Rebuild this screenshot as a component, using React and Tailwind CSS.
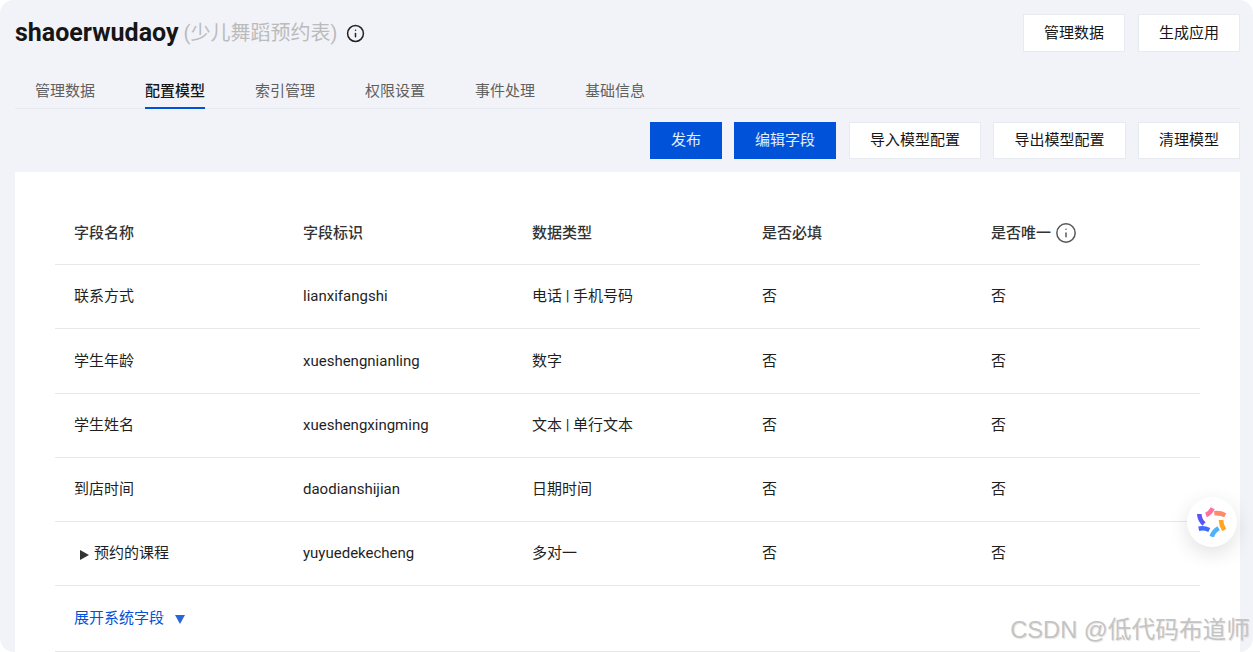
import { Info } from 'lucide-react';

const tabs = ['管理数据', '配置模型', '索引管理', '权限设置', '事件处理', '基础信息'];

const rows = [
  ['联系方式', 'lianxifangshi', '电话 | 手机号码', 'h-[64px]'],
  ['学生年龄', 'xueshengnianling', '数字', 'h-[65px]'],
  ['学生姓名', 'xueshengxingming', '文本 | 单行文本', 'h-[64px]'],
  ['到店时间', 'daodianshijian', '日期时间', 'h-[64px]'],
  ['预约的课程', 'yuyuedekecheng', '多对一', 'h-[64px]', true],
];

function WhiteButton({ children, className = '' }) {
  return (
    <button className={`bg-white border border-[#e8eaf1] text-[15px] text-[#161616] flex items-center justify-center ${className}`}>
      {children}
    </button>
  );
}

function BlueButton({ children, className = '' }) {
  return (
    <button className={`h-[37px] bg-[#0052d9] text-[15px] text-white/90 flex items-center justify-center ${className}`}>
      {children}
    </button>
  );
}

function AppLogo() {
  return (
    <svg width="30" height="30" viewBox="0 0 30 30" fill="none" strokeWidth="4.6">
      <path d="M9 8 Q13 6.5 15.7 1.3" stroke="#ff6f9f" />
      <path d="M17.3 6.3 Q23 5.6 28.3 8.3" stroke="#ff8a6b" />
      <path d="M24 13 Q24 18 27.3 23" stroke="#ffa51f" />
      <path d="M21.7 21.3 Q16.5 24 14.7 29.7" stroke="#4fb0ff" />
      <path d="M12.3 23 Q7 20.5 1.7 21.7" stroke="#3f6cff" />
      <path d="M7 17 Q2.5 13 2.3 7" stroke="#5a55f5" />
    </svg>
  );
}

export default function App() {
  return (
    <div className="relative w-[1253px] h-[652px] overflow-hidden bg-white font-['Roboto','Noto_Sans_CJK_SC',sans-serif]">
      <div className="h-full bg-[#f2f3f8] rounded-[14px] pl-[15px] pr-[13px] flex flex-col">
        {/* header */}
        <div className="flex items-center justify-between pt-[14px] h-[52px]">
          <div className="flex items-center">
            <span className="text-[25px] font-bold text-[#161616]">shaoerwudaoy</span>
            <span className="text-[20px] text-[#bbbbbb] ml-[5px]">(少儿舞蹈预约表)</span>
            <Info size={19} strokeWidth={1.9} className="ml-[9px] text-[#222222]" />
          </div>
          <div className="flex gap-[13px]">
            <WhiteButton className="w-[102px] h-[38px]">管理数据</WhiteButton>
            <WhiteButton className="w-[102px] h-[38px]">生成应用</WhiteButton>
          </div>
        </div>

        {/* tabs */}
        <div className="flex h-[57px] items-end border-b border-[#e8eaf1] pl-[20px] gap-[50px]">
          {tabs.map((t, i) => (
            <div
              key={t}
              className={`h-[28px] -mb-px text-[15px] leading-[20px] border-b-2 ${i === 1 ? 'font-medium text-[#161616] border-[#0052d9]' : 'text-[#5f5f5f] border-transparent'}`}
            >
              {t}
            </div>
          ))}
        </div>

        {/* toolbar */}
        <div className="flex justify-end gap-[12px] mt-[13px]">
          <BlueButton className="w-[72px]">发布</BlueButton>
          <BlueButton className="w-[102px] mr-px">编辑字段</BlueButton>
          <WhiteButton className="w-[132px] h-[37px]">导入模型配置</WhiteButton>
          <WhiteButton className="w-[133px] h-[37px]">导出模型配置</WhiteButton>
          <WhiteButton className="w-[102px] h-[37px]">清理模型</WhiteButton>
        </div>

        {/* table card */}
        <div className="flex-1 bg-white mt-[13px] px-[40px] text-[15px] text-[#1f1f1f]">
          <div className="grid grid-cols-[229px_229px_230px_229px_1fr] h-[93px] items-center pt-[30px] border-b border-[#e8e8e8] font-medium text-[#333333]">
            <div className="pl-[19px]">字段名称</div>
            <div className="pl-[19px]">字段标识</div>
            <div className="pl-[19px]">数据类型</div>
            <div className="pl-[19px]">是否必填</div>
            <div className="pl-[19px] flex items-center gap-[4px]">
              是否唯一
              <Info size={22} strokeWidth={1.6} className="text-[#555555]" />
            </div>
          </div>
          {rows.map(([name, id, type, h, nested]) => (
            <div key={id} className={`grid grid-cols-[229px_229px_230px_229px_1fr] items-center border-b border-[#e8e8e8] ${h}`}>
              <div className="pl-[19px] flex items-center">
                {nested && <span className="ml-[6px] mr-[5px] mt-[2px] w-0 h-0 border-y-[5px] border-y-transparent border-l-[9px] border-l-[#333333]" />}
                {name}
              </div>
              <div className="pl-[19px]">{id}</div>
              <div className="pl-[19px]">{type}</div>
              <div className="pl-[19px]">否</div>
              <div className="pl-[19px]">否</div>
            </div>
          ))}
          <div className="h-[66px] flex items-center pl-[19px] border-b border-[#e8e8e8] text-[#0052d9]">
            展开系统字段
            <span className="ml-[11px] mt-[2px] w-0 h-0 border-x-[5.5px] border-x-transparent border-t-[9px] border-t-[#2a66db]" />
          </div>
        </div>
      </div>

      {/* floating assistant button */}
      <div className="absolute left-[1187px] top-[497px] w-[50px] h-[50px] rounded-full bg-white shadow-[0_6px_20px_rgba(0,0,0,0.12)] flex items-center justify-center">
        <AppLogo />
      </div>

      {/* watermark */}
      <div className="absolute right-[3px] top-[614px] text-[23.7px] leading-[32px] text-[#c4c4c4] font-['Liberation_Sans','Noto_Sans_CJK_SC',sans-serif] [text-shadow:1px_1px_1px_rgba(0,0,0,0.1)]">
        CSDN @低代码布道师
      </div>
    </div>
  );
}
